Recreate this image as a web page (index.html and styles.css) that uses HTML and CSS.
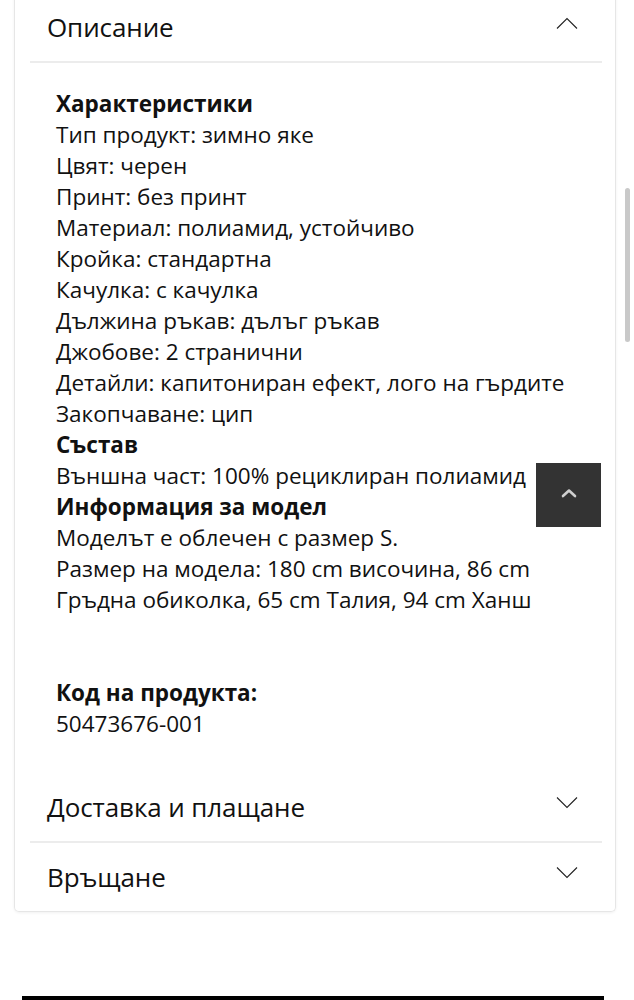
FILE: index.html
```html
<!DOCTYPE html>
<html lang="bg">
<head>
<meta charset="utf-8">
<link rel="stylesheet" href="styles.css">
</head>
<body>
<div class="page">
  <div class="card">
    <div class="acc-head">
      <span class="acc-title">Описание</span>
      <svg class="chev" width="22" height="12" viewBox="0 0 22 12"><path d="M1 11.5 L11 1.5 L21 11.5" fill="none" stroke="#222" stroke-width="1.1"/></svg>
    </div>
    <div class="divider"></div>
    <div class="acc-body">
      <div class="b">Характеристики</div>
      <div>Тип продукт: зимно яке</div>
      <div>Цвят: черен</div>
      <div>Принт: без принт</div>
      <div>Материал: полиамид, устойчиво</div>
      <div>Кройка: стандартна</div>
      <div>Качулка: с качулка</div>
      <div>Дължина ръкав: дълъг ръкав</div>
      <div>Джобове: 2 странични</div>
      <div>Детайли: капитониран ефект, лого на гърдите</div>
      <div>Закопчаване: цип</div>
      <div class="b">Състав</div>
      <div>Външна част: 100% рециклиран полиамид</div>
      <div class="b">Информация за модел</div>
      <div>Моделът е облечен с размер S.</div>
      <div>Размер на модела: 180 cm височина, 86 cm</div>
      <div>Гръдна обиколка, 65 cm Талия, 94 cm Ханш</div>
      <div class="code">
        <div class="b">Код на продукта:</div>
        <div>50473676-001</div>
      </div>
    </div>
    <div class="acc-head">
      <span class="acc-title">Доставка и плащане</span>
      <svg class="chev" width="22" height="12" viewBox="0 0 22 12"><path d="M1 0.5 L11 10.5 L21 0.5" fill="none" stroke="#222" stroke-width="1.1"/></svg>
    </div>
    <div class="divider"></div>
    <div class="acc-head">
      <span class="acc-title">Връщане</span>
      <svg class="chev" width="22" height="12" viewBox="0 0 22 12"><path d="M1 0.5 L11 10.5 L21 0.5" fill="none" stroke="#222" stroke-width="1.1"/></svg>
    </div>
  </div>
  <div class="footer-bar"></div>
</div>
<button class="to-top" aria-label="Нагоре">
  <svg width="16" height="10" viewBox="0 0 16 10"><path d="M2 8 L8 2.5 L14 8" fill="none" stroke="#cfcfcf" stroke-width="2.6" stroke-linecap="round" stroke-linejoin="round"/></svg>
</button>
<div class="scrollbar"></div>
</body>
</html>
```
FILE: styles.css
```css
*, *::before, *::after {
  box-sizing: border-box;
}
html, body {
  margin: 0;
  padding: 0;
  background: #fff;
}
body {
  font-family: "Open Sans", "Noto Sans", sans-serif;
  color: #111;
  overflow: hidden;
}
.page {
  padding: 0 18px 0 14px;
}
.card {
  margin-top: -7px;
  width: 602px;
  border: 1px solid #e6e6e6;
  border-top: none;
  border-radius: 0 0 5px 5px;
  box-shadow: 0 1px 3px rgba(0,0,0,0.06);
  padding: 0 13px 0 15px;
}
.acc-head {
  height: 68px;
  display: flex;
  align-items: center;
  justify-content: space-between;
  padding: 0 24px 0 17px;
}
.acc-title {
  font-size: 26px;
  line-height: 34px;
  letter-spacing: -0.1px;
}
.chev {
  display: block;
  margin-top: -8px;
}
.divider {
  height: 2px;
  background: #ececec;
}
.acc-body {
  padding: 25px 0 34px 26px;
  font-size: 22.5px;
  line-height: 31px;
}
.b {
  font-weight: 700;
}
.code {
  margin-top: 62px;
}
.footer-bar {
  margin: 84px 0 0 8px;
  width: 582px;
  height: 8px;
  background: #000;
}
.to-top {
  position: fixed;
  left: 536px;
  top: 463px;
  width: 65px;
  height: 64px;
  border: none;
  padding: 0;
  background: #333;
  display: flex;
  align-items: center;
  justify-content: center;
}
.to-top svg {
  display: block;
  margin-top: -4px;
}
.scrollbar {
  position: fixed;
  left: 625px;
  top: 188px;
  width: 5px;
  height: 154px;
  border-radius: 3px;
  background: #c9c9c9;
}
```
